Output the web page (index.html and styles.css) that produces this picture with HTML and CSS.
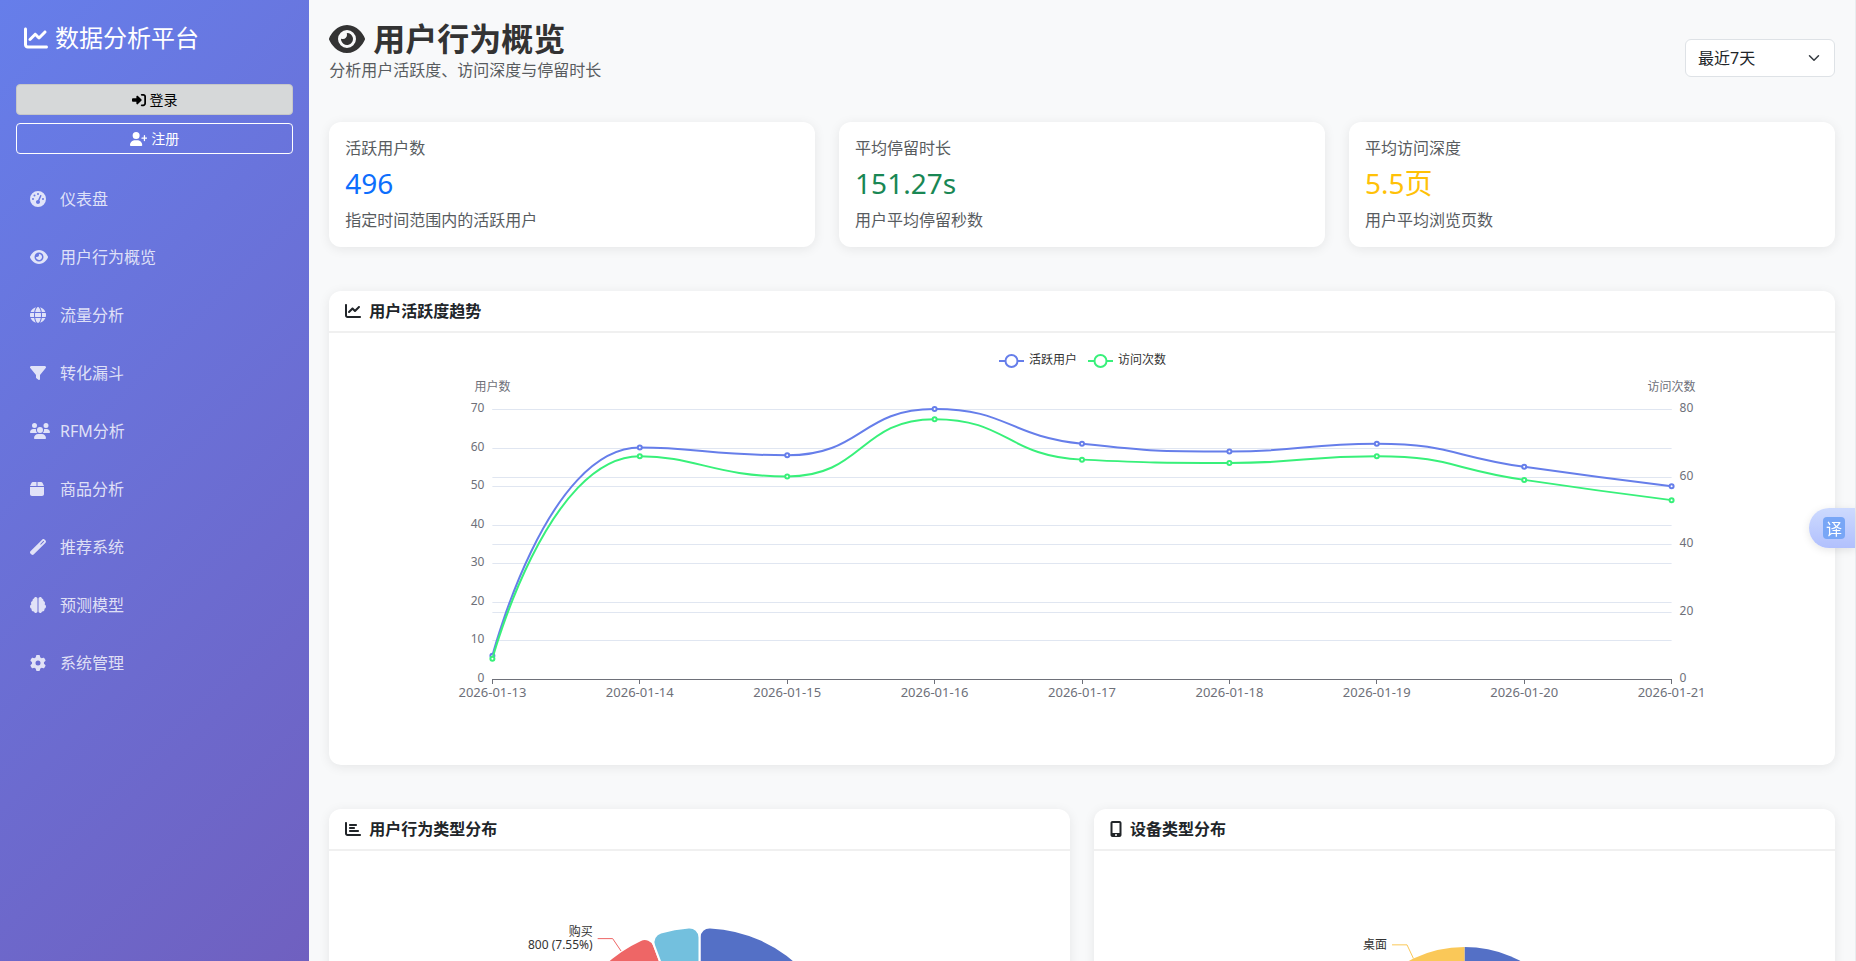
FILE: index.html
```html
<!DOCTYPE html>
<html lang="zh-CN">
<head>
<meta charset="utf-8">
<meta name="viewport" content="width=device-width, initial-scale=1">
<title>用户行为概览</title>
<link rel="stylesheet" href="styles.css">
</head>
<body>
<svg class="sprite" aria-hidden="true">
  <symbol id="i-line" viewBox="0 0 512 512"><path d="M64 64c0-17.700-14.300-32-32-32S0 46.300 0 64V400c0 44.200 35.800 80 80 80H480c17.700 0 32-14.300 32-32s-14.300-32-32-32H80c-8.800 0-16-7.200-16-16V64zm406.600 86.600c12.500-12.500 12.500-32.800 0-45.300s-32.800-12.500-45.300 0L320 210.700l-57.400-57.400c-12.500-12.500-32.800-12.500-45.300 0l-112 112c-12.500 12.500-12.500 32.800 0 45.300s32.800 12.500 45.300 0L240 221.300l57.400 57.400c12.500 12.500 32.800 12.500 45.300 0l128-128z"/></symbol>
  <symbol id="i-eye" viewBox="0 0 576 512"><path d="M288 32c-80.800 0-145.500 36.800-192.600 80.600C48.600 156 17.300 208 2.500 243.700c-3.300 7.900-3.300 16.700 0 24.600C17.300 304 48.600 356 95.400 399.400C142.500 443.200 207.200 480 288 480s145.500-36.800 192.600-80.600c46.800-43.500 78.100-95.400 93-131.100c3.300-7.900 3.300-16.700 0-24.600c-14.900-35.700-46.200-87.700-93-131.100C433.500 68.800 368.800 32 288 32zM144 256a144 144 0 1 1 288 0 144 144 0 1 1 -288 0zm144-64c0 35.300-28.700 64-64 64c-7.100 0-13.900-1.200-20.300-3.300c-5.500-1.800-11.900 1.600-11.700 7.400c.3 6.900 1.300 13.800 3.200 20.700c13.700 51.200 66.400 81.600 117.600 67.900s81.600-66.400 67.900-117.600c-11.100-41.500-47.800-69.400-88.600-71.100c-5.800-.2-9.200 6.100-7.400 11.700c2.100 6.400 3.300 13.200 3.300 20.300z"/></symbol>
  <symbol id="i-login" viewBox="0 0 512 512"><path d="M217.900 105.900L340.700 228.700c7.200 7.200 11.300 17.100 11.300 27.300s-4.100 20.100-11.300 27.300L217.900 406.100c-6.400 6.400-15 9.900-24 9.900c-18.700 0-33.900-15.200-33.900-33.900l0-62.100L32 320c-17.700 0-32-14.300-32-32l0-64c0-17.700 14.300-32 32-32l128 0 0-62.100c0-18.700 15.200-33.900 33.900-33.900c9 0 17.600 3.600 24 9.900zM352 416l64 0c17.700 0 32-14.300 32-32l0-256c0-17.700-14.300-32-32-32l-64 0c-17.700 0-32-14.300-32-32s14.300-32 32-32l64 0c53 0 96 43 96 96l0 256c0 53-43 96-96 96l-64 0c-17.700 0-32-14.300-32-32s14.300-32 32-32z"/></symbol>
  <symbol id="i-userplus" viewBox="0 0 640 512"><path d="M96 128a128 128 0 1 1 256 0A128 128 0 1 1 96 128zM0 482.300C0 383.800 79.800 304 178.300 304h91.400C368.200 304 448 383.800 448 482.300c0 16.400-13.300 29.700-29.700 29.700H29.700C13.300 512 0 498.700 0 482.300zM504 312V248H440c-13.300 0-24-10.700-24-24s10.700-24 24-24h64V136c0-13.300 10.700-24 24-24s24 10.700 24 24v64h64c13.300 0 24 10.700 24 24s-10.700 24-24 24H552v64c0 13.300-10.700 24-24 24s-24-10.700-24-24z"/></symbol>
  <symbol id="i-gauge" viewBox="0 0 512 512"><path d="M0 256a256 256 0 1 1 512 0A256 256 0 1 1 0 256zM288 96a32 32 0 1 0 -64 0 32 32 0 1 0 64 0zM256 416c35.300 0 64-28.700 64-64c0-17.400-6.900-33.100-18.100-44.600L366 161.700c5.300-12.100-.2-26.300-12.300-31.600s-26.300 .2-31.600 12.300L257.900 288c-.6 0-1.300 0-1.900 0c-35.300 0-64 28.700-64 64s28.700 64 64 64zM176 144a32 32 0 1 0 -64 0 32 32 0 1 0 64 0zM96 288a32 32 0 1 0 0-64 32 32 0 1 0 0 64zm352-32a32 32 0 1 0 -64 0 32 32 0 1 0 64 0z"/></symbol>
  <symbol id="i-globe" viewBox="0 0 512 512"><path d="M352 256c0 22.200-1.200 43.600-3.300 64H163.300c-2.200-20.400-3.300-41.800-3.300-64s1.200-43.600 3.300-64H348.700c2.200 20.400 3.300 41.800 3.300 64zm28.800-64H503.900c5.300 20.500 8.100 41.900 8.100 64s-2.800 43.500-8.100 64H380.800c2.100-20.600 3.200-42 3.200-64s-1.100-43.400-3.200-64zm112.600-32H376.700c-10-63.900-29.800-117.400-55.300-151.600c78.300 20.700 142 77.500 171.900 151.600zm-149.100 0H167.700c6.100-36.400 15.500-68.600 27-94.700c10.500-23.600 22.200-40.700 33.500-51.500C239.400 3.200 248.700 0 256 0s16.600 3.200 27.800 13.800c11.300 10.800 23 27.900 33.500 51.500c11.600 26 20.900 58.200 27 94.700zm-209 0H18.600C48.600 85.900 112.200 29.100 190.600 8.400C165.100 42.600 145.300 96.100 135.300 160zM8.100 192H131.200c-2.100 20.600-3.200 42-3.200 64s1.100 43.400 3.200 64H8.100C2.800 299.500 0 278.100 0 256s2.800-43.500 8.100-64zM194.700 446.600c-11.600-26-20.900-58.200-27-94.600H344.300c-6.100 36.400-15.500 68.600-27 94.600c-10.500 23.600-22.200 40.700-33.500 51.500C272.600 508.800 263.300 512 256 512s-16.600-3.200-27.800-13.800c-11.300-10.800-23-27.900-33.500-51.500zM135.300 352c10 63.900 29.800 117.400 55.300 151.600C112.200 482.900 48.600 426.100 18.600 352H135.300zm358.100 0c-30 74.100-93.600 130.900-171.900 151.600c25.500-34.200 45.200-87.700 55.300-151.600H493.400z"/></symbol>
  <symbol id="i-filter" viewBox="0 0 512 512"><path d="M3.900 54.900C10.500 40.900 24.500 32 40 32H472c15.500 0 29.500 8.900 36.100 22.900s4.600 30.500-5.200 42.500L320 320.900V448c0 12.100-6.800 23.200-17.700 28.600s-23.800 4.300-33.500-3l-64-48c-8.100-6-12.800-15.500-12.800-25.600V320.900L9 97.300C-.7 85.400-2.800 68.800 3.900 54.900z"/></symbol>
  <symbol id="i-users" viewBox="0 0 640 512"><path d="M144 0a80 80 0 1 1 0 160A80 80 0 1 1 144 0zM512 0a80 80 0 1 1 0 160A80 80 0 1 1 512 0zM0 298.700C0 239.800 47.800 192 106.700 192h42.700c15.900 0 31 3.500 44.600 9.700c-1.300 7.200-1.900 14.700-1.900 22.300c0 38.200 16.800 72.500 43.300 96c-.2 0-.4 0-.7 0H21.300C9.600 320 0 310.400 0 298.700zM405.300 320c-.2 0-.4 0-.7 0c26.600-23.500 43.300-57.800 43.300-96c0-7.600-.7-15-1.900-22.300c13.600-6.300 28.700-9.700 44.600-9.700h42.700C592.200 192 640 239.800 640 298.700c0 11.800-9.600 21.300-21.300 21.300H405.300zM224 224a96 96 0 1 1 192 0 96 96 0 1 1 -192 0zM128 485.300C128 411.700 187.700 352 261.300 352H378.700C452.300 352 512 411.700 512 485.300c0 14.700-11.900 26.700-26.700 26.700H154.700c-14.700 0-26.700-11.900-26.700-26.700z"/></symbol>
  <symbol id="i-box" viewBox="0 0 448 512"><path d="M50.700 58.500L0 160H208V32H93.700C75.500 32 58.900 42.300 50.700 58.500zM240 160H448L397.300 58.500C389.100 42.300 372.500 32 354.300 32H240V160zm208 32H0V416c0 35.300 28.700 64 64 64H384c35.300 0 64-28.700 64-64V192z"/></symbol>
  <symbol id="i-wand" viewBox="0 0 512 512"><path fill-rule="evenodd" d="M14.100 463.300c-18.700-18.700-18.700-49.100 0-67.900L395.400 14.100c18.700-18.700 49.100-18.700 67.900 0l34.600 34.600c18.700 18.700 18.700 49.100 0 67.900L116.500 497.900c-18.700 18.700-49.100 18.700-67.900 0L14.100 463.300zM347.600 187.600l105-105L429.400 59.300l-105 105 23.300 23.300z"/></symbol>
  <symbol id="i-brain" viewBox="0 0 512 512"><path d="M184 0c30.900 0 56 25.100 56 56V456c0 30.900-25.100 56-56 56c-28.900 0-52.700-21.900-55.700-50.100c-5.200 1.400-10.700 2.100-16.300 2.100c-35.300 0-64-28.700-64-64c0-7.400 1.300-14.600 3.600-21.200C21.400 367.400 0 338.200 0 304c0-31.900 18.700-59.500 45.800-72.300C37.100 220.800 32 207 32 192c0-30.700 21.600-56.300 50.400-62.600C80.800 123.900 80 118 80 112c0-29.900 20.600-55.100 48.300-62.100C131.300 21.900 155.100 0 184 0zM328 0c28.900 0 52.600 21.900 55.700 49.900c27.800 7 48.300 32.100 48.300 62.100c0 6-.8 11.900-2.400 17.400c28.800 6.200 50.400 31.900 50.400 62.600c0 15-5.100 28.800-13.800 39.700C493.300 244.500 512 272.100 512 304c0 34.200-21.400 63.400-51.600 74.800c2.300 6.600 3.600 13.800 3.600 21.200c0 35.300-28.700 64-64 64c-5.600 0-11.100-.7-16.300-2.100c-3 28.200-26.800 50.100-55.700 50.100c-30.900 0-56-25.100-56-56V56c0-30.900 25.100-56 56-56z"/></symbol>
  <symbol id="i-gear" viewBox="0 0 512 512"><path d="M495.900 166.600c3.200 8.700 .5 18.400-6.400 24.600l-43.300 39.400c1.100 8.300 1.700 16.800 1.700 25.400s-.6 17.100-1.700 25.400l43.300 39.400c6.900 6.200 9.600 15.900 6.400 24.600c-4.400 11.900-9.700 23.300-15.800 34.300l-4.700 8.100c-6.600 11-14 21.400-22.100 31.200c-5.900 7.200-15.700 9.600-24.500 6.800l-55.700-17.700c-13.400 10.300-28.200 18.900-44 25.400l-12.500 57.100c-2 9.100-9 16.300-18.200 17.800c-13.800 2.300-28 3.500-42.500 3.500s-28.700-1.200-42.500-3.500c-9.200-1.500-16.200-8.700-18.200-17.800l-12.500-57.100c-15.800-6.500-30.600-15.100-44-25.400L83.100 425.900c-8.800 2.800-18.600 .3-24.500-6.800c-8.100-9.800-15.500-20.200-22.100-31.200l-4.700-8.100c-6.100-11-11.400-22.400-15.800-34.300c-3.200-8.700-.5-18.400 6.400-24.600l43.300-39.400C64.600 273.100 64 264.600 64 256s.6-17.100 1.700-25.400L22.400 191.200c-6.900-6.200-9.600-15.900-6.400-24.600c4.400-11.900 9.700-23.300 15.800-34.300l4.700-8.100c6.600-11 14-21.400 22.100-31.200c5.900-7.200 15.700-9.600 24.500-6.800l55.700 17.700c13.400-10.300 28.200-18.900 44-25.400l12.500-57.100c2-9.100 9-16.300 18.200-17.800C227.300 1.200 241.500 0 256 0s28.700 1.200 42.500 3.500c9.200 1.500 16.200 8.700 18.200 17.800l12.500 57.100c15.800 6.500 30.600 15.100 44 25.400l55.700-17.700c8.800-2.800 18.600-.3 24.500 6.800c8.100 9.800 15.500 20.200 22.100 31.200l4.700 8.100c6.100 11 11.400 22.400 15.800 34.300zM256 336a80 80 0 1 0 0-160 80 80 0 1 0 0 160z"/></symbol>
  <symbol id="i-bars" viewBox="0 0 512 512"><path d="M32 32c17.700 0 32 14.300 32 32V400c0 8.800 7.200 16 16 16H480c17.700 0 32 14.300 32 32s-14.300 32-32 32H80c-44.200 0-80-35.800-80-80V64C0 46.300 14.300 32 32 32zm96 96c0-17.700 14.300-32 32-32l192 0c17.700 0 32 14.300 32 32s-14.300 32-32 32H160c-17.700 0-32-14.300-32-32zm32 64H288c17.700 0 32 14.300 32 32s-14.300 32-32 32H160c-17.700 0-32-14.300-32-32s14.300-32 32-32zm0 96H416c17.700 0 32 14.300 32 32s-14.300 32-32 32H160c-17.700 0-32-14.300-32-32s14.300-32 32-32z"/></symbol>
  <symbol id="i-mobile" viewBox="0 0 384 512"><path fill-rule="evenodd" d="M16 64C16 28.700 44.700 0 80 0H304c35.300 0 64 28.700 64 64V448c0 35.300-28.700 64-64 64H80c-35.300 0-64-28.700-64-64V64zM224 448a32 32 0 1 0 -64 0 32 32 0 1 0 64 0zM304 64H80V384H304V64z"/></symbol>
</svg>

<div class="layout">
  <aside class="sidebar">
    <div class="brand"><svg class="icon" viewBox="0 0 512 512"><use href="#i-line"/></svg><span>数据分析平台</span></div>
    <div class="auth">
      <button type="button" class="btn btn-light"><svg class="icon" viewBox="0 0 512 512"><use href="#i-login"/></svg>登录</button>
      <button type="button" class="btn btn-outline"><svg class="icon icon-640" viewBox="0 0 640 512"><use href="#i-userplus"/></svg>注册</button>
    </div>
    <nav class="nav">
      <a href="#"><span class="nav-icon"><svg class="icon" viewBox="0 0 512 512"><use href="#i-gauge"/></svg></span>仪表盘</a>
      <a href="#"><span class="nav-icon"><svg class="icon icon-576" viewBox="0 0 576 512"><use href="#i-eye"/></svg></span>用户行为概览</a>
      <a href="#"><span class="nav-icon"><svg class="icon" viewBox="0 0 512 512"><use href="#i-globe"/></svg></span>流量分析</a>
      <a href="#"><span class="nav-icon"><svg class="icon" viewBox="0 0 512 512"><use href="#i-filter"/></svg></span>转化漏斗</a>
      <a href="#"><span class="nav-icon"><svg class="icon icon-640" viewBox="0 0 640 512"><use href="#i-users"/></svg></span>RFM分析</a>
      <a href="#"><span class="nav-icon"><svg class="icon icon-448" viewBox="0 0 448 512"><use href="#i-box"/></svg></span>商品分析</a>
      <a href="#"><span class="nav-icon"><svg class="icon" viewBox="0 0 512 512"><use href="#i-wand"/></svg></span>推荐系统</a>
      <a href="#"><span class="nav-icon"><svg class="icon" viewBox="0 0 512 512"><use href="#i-brain"/></svg></span>预测模型</a>
      <a href="#"><span class="nav-icon"><svg class="icon" viewBox="0 0 512 512"><use href="#i-gear"/></svg></span>系统管理</a>
    </nav>
  </aside>

  <main class="main">
    <header class="page-header">
      <div class="heading">
        <h1><svg class="icon icon-576" viewBox="0 0 576 512"><use href="#i-eye"/></svg>用户行为概览</h1>
        <p class="muted">分析用户活跃度、访问深度与停留时长</p>
      </div>
      <div class="range">
        <select aria-label="时间范围"><option>最近7天</option></select>
        <svg class="chevron" viewBox="0 0 16 16" aria-hidden="true"><path d="m2 5 6 6 6-6"/></svg>
      </div>
    </header>

    <section class="stats">
      <article class="card stat"><h2 class="muted">活跃用户数</h2><p class="value blue">496</p><p class="muted">指定时间范围内的活跃用户</p></article>
      <article class="card stat"><h2 class="muted">平均停留时长</h2><p class="value green">151.27s</p><p class="muted">用户平均停留秒数</p></article>
      <article class="card stat"><h2 class="muted">平均访问深度</h2><p class="value yellow">5.5页</p><p class="muted">用户平均浏览页数</p></article>
    </section>

    <section class="card">
      <h2 class="card-title"><svg class="icon" viewBox="0 0 512 512"><use href="#i-line"/></svg>用户活跃度趋势</h2>
      <div class="card-body"><svg class="chart" id="trend" role="img" aria-label="用户活跃度趋势"></svg></div>
    </section>

    <div class="pair">
      <section class="card">
        <h2 class="card-title"><svg class="icon" viewBox="0 0 512 512"><use href="#i-bars"/></svg>用户行为类型分布</h2>
        <div class="card-body"><svg class="chart" id="behavior" role="img" aria-label="用户行为类型分布"></svg></div>
      </section>
      <section class="card">
        <h2 class="card-title"><svg class="icon icon-384" viewBox="0 0 384 512"><use href="#i-mobile"/></svg>设备类型分布</h2>
        <div class="card-body"><svg class="chart" id="device" role="img" aria-label="设备类型分布"></svg></div>
      </section>
    </div>
  </main>
</div>
<button type="button" class="translate" aria-label="翻译"><span>译</span></button>
<script src="charts.js"></script>
</body>
</html>
```

FILE: styles.css
```css
* { box-sizing: border-box; }

body {
  margin: 0;
  background: #f8f9fa;
  color: #212529;
  font: 16px/24px "Noto Sans", "Noto Sans CJK SC", sans-serif;
}

h1, h2, p { margin: 0; font-weight: 400; }

.sprite { position: absolute; width: 0; height: 0; }

.layout {
  display: grid;
  grid-template-columns: 1fr 5fr;
  min-height: 100vh;
  border-right: 1px solid #e9ecef;
}

.icon { width: 1em; height: 1em; fill: currentColor; flex: none; }
.icon-640 { width: 1.25em; }
.icon-576 { width: 1.125em; }
.icon-448 { width: 0.875em; }
.icon-384 { width: 0.75em; }

/* Sidebar */
.sidebar {
  background: linear-gradient(135deg, #667eea 0%, #764ba2 132%);
  color: #fff;
}

.brand {
  display: flex;
  align-items: center;
  gap: 7px;
  padding: 20px 24px 28px;
  font-size: 24px;
  line-height: 36px;
}

.auth { display: grid; gap: 8px; padding: 0 16px; }

.btn {
  display: flex;
  align-items: center;
  justify-content: center;
  gap: 4px;
  padding: 4px 8px;
  border: 1px solid #fff;
  border-radius: 4px;
  font: 14px/21px "Noto Sans", "Noto Sans CJK SC", sans-serif;
}
.btn-light { background: #d6d8d9; border-color: #c6c7c8; color: #000; }
.btn-outline { background: transparent; color: #fff; }

.nav { display: grid; padding-top: 16px; }
.nav a {
  display: flex;
  align-items: center;
  padding: 17px 30px;
  color: rgba(255, 255, 255, 0.8);
  text-decoration: none;
}
.nav-icon { display: flex; width: 30px; }

/* Main column */
.main {
  display: flex;
  flex-direction: column;
  gap: 44px;
  min-width: 0;
  padding: 20px 20px 44px;
}

.page-header {
  display: flex;
  align-items: center;
  justify-content: space-between;
  margin-bottom: -18px;
}
.heading { padding-bottom: 14px; }
.page-header h1 {
  display: flex;
  align-items: center;
  gap: 8px;
  color: #333;
  font-size: 32px;
  font-weight: 700;
  line-height: 38px;
}

.muted { color: #585c5f; }

.range { position: relative; width: 150px; }
.range select {
  display: block;
  width: 100%;
  height: 38px;
  padding: 6px 36px 6px 12px;
  border: 1px solid #dee2e6;
  border-radius: 6px;
  background: #fff;
  color: #212529;
  font: 16px/24px "Noto Sans", "Noto Sans CJK SC", sans-serif;
  appearance: none;
}
.chevron {
  position: absolute;
  top: 13px;
  right: 15px;
  width: 12px;
  height: 12px;
  fill: none;
  stroke: #343a40;
  stroke-width: 2;
  stroke-linecap: round;
  stroke-linejoin: round;
  pointer-events: none;
}

.card {
  min-width: 0;
  border-radius: 12px;
  background: #fff;
  box-shadow: 0 2px 12px rgba(0, 0, 0, 0.08);
}

.stats { display: grid; grid-template-columns: repeat(3, 1fr); gap: 24px; }
.stat { display: grid; gap: 8px; padding: 17px 16px 15px; }
.stat h2 { font-size: 16px; line-height: 19px; }
.value { font-size: 28px; line-height: 34px; }
.blue { color: #0d6efd; }
.green { color: #198754; }
.yellow { color: #ffc107; }

.pair { display: grid; grid-template-columns: repeat(2, 1fr); gap: 24px; }

.card-title {
  display: flex;
  align-items: center;
  gap: 8px;
  padding: 8px 16px;
  border-bottom: 2px solid #f0f0f0;
  font-size: 16px;
  font-weight: 600;
  line-height: 24px;
}
.card-body { padding: 16px; }

/* Charts */
.chart {
  display: block;
  width: 100%;
  height: 400px;
  overflow: visible;
  font-size: 12px;
}
.chart .axis { fill: #6e7079; }
.chart .date { font-size: 13px; }
.chart .label { fill: #333; }

.translate {
  position: fixed;
  top: 508px;
  right: 1px;
  display: flex;
  align-items: center;
  width: 46px;
  height: 40px;
  padding: 0 0 0 14px;
  border: 0;
  border-radius: 20px 0 0 20px;
  background: linear-gradient(#cddafe, #b1c0fd);
  box-shadow: 0 2px 8px rgba(0, 0, 0, 0.1);
}
.translate span {
  width: 22px;
  border-radius: 4px;
  background: #78a6f6;
  color: #fff;
  font: 16px/22px "Noto Sans CJK SC", sans-serif;
  text-align: center;
}
```

FILE: charts.js
```js
const NS = 'http://www.w3.org/2000/svg';

function add(parent, tag, attrs, text) {
  const el = document.createElementNS(NS, tag);
  for (const key in attrs) el.setAttribute(key, attrs[key]);
  if (text !== undefined) el.textContent = text;
  parent.appendChild(el);
  return el;
}

// Smooth curve through the points, with control points kept inside each segment.
function smoothPath(points) {
  const clamp = (v, a, b) => Math.max(Math.min(v, Math.max(a, b)), Math.min(a, b));
  let d = `M${points[0]}`;
  let [cx, cy] = points[0];
  for (let i = 1; i < points.length; i++) {
    const [px, py] = points[i - 1];
    const [x, y] = points[i];
    let c1x = x, c1y = y, nx = x, ny = y;
    if (points[i + 1]) {
      const [qx, qy] = points[i + 1];
      const before = Math.hypot(x - px, y - py);
      const after = Math.hypot(qx - x, qy - y);
      const ratio = after / (after + before);
      nx = clamp(x + (qx - px) * 0.5 * ratio, qx, x);
      ny = clamp(y + (qy - py) * 0.5 * ratio, qy, y);
      c1x = clamp(x - (nx - x) * before / after, px, x);
      c1y = clamp(y - (ny - y) * before / after, py, y);
      nx = x + (x - c1x) * after / before;
      ny = y + (y - c1y) * after / before;
    }
    d += `C${cx},${cy} ${c1x},${c1y} ${x},${y}`;
    cx = nx;
    cy = ny;
  }
  return d;
}

function drawTrend() {
  const svg = document.getElementById('trend');
  svg.replaceChildren();
  const width = svg.clientWidth;
  const left = width * 0.1, right = width * 0.9, top = 60, bottom = 330;
  const dates = [13, 14, 15, 16, 17, 18, 19, 20, 21];
  const series = [
    { name: '活跃用户', color: '#667eea', max: 70, values: [6, 60, 58, 70, 61, 59, 61, 55, 50] },
    { name: '访问次数', color: '#38f07a', max: 80, values: [6, 66, 60, 77, 65, 64, 66, 59, 53] }
  ];
  const xAt = i => left + (right - left) * i / (dates.length - 1);
  const yAt = (v, max) => bottom - (bottom - top) * v / max;
  const crisp = v => Math.round(v) + 0.5;

  [[70, 10, left - 8, 'end'], [80, 20, right + 8, 'start']].forEach(([max, step, x, anchor]) => {
    for (let v = 0; v <= max; v += step) {
      const y = yAt(v, max);
      if (v) add(svg, 'line', { x1: left, x2: right, y1: crisp(y), y2: crisp(y), stroke: '#e0e6f1' });
      add(svg, 'text', { x, y: y + 3, 'text-anchor': anchor, class: 'axis' }, v);
    }
  });
  add(svg, 'text', { x: left, y: 42, 'text-anchor': 'middle', class: 'axis' }, '用户数');
  add(svg, 'text', { x: right, y: 42, 'text-anchor': 'middle', class: 'axis' }, '访问次数');

  add(svg, 'line', { x1: left, x2: right, y1: bottom + 0.5, y2: bottom + 0.5, stroke: '#6e7079' });
  dates.forEach((day, i) => {
    const x = Math.floor(xAt(i)) + 0.5;
    add(svg, 'line', { x1: x, x2: x, y1: bottom, y2: bottom + 5, stroke: '#6e7079' });
    add(svg, 'text', { x: xAt(i), y: bottom + 18, 'text-anchor': 'middle', class: 'axis date' }, `2026-01-${day}`);
  });

  series.forEach((s, n) => {
    const points = s.values.map((v, i) => [xAt(i), yAt(v, s.max)]);
    add(svg, 'path', { d: smoothPath(points), fill: 'none', stroke: s.color, 'stroke-width': 2 });
    points.forEach(([cx, cy]) => add(svg, 'circle', { cx, cy, r: 2, fill: '#fff', stroke: s.color, 'stroke-width': 2 }));
    const x = width / 2 - 83 + n * 89;
    add(svg, 'line', { x1: x, x2: x + 25, y1: 12, y2: 12, stroke: s.color, 'stroke-width': 2 });
    add(svg, 'circle', { cx: x + 12.5, cy: 12, r: 6, fill: '#fff', stroke: s.color, 'stroke-width': 2 });
    add(svg, 'text', { x: x + 30, y: 15, class: 'label' }, s.name);
  });
}

// Ring or pie sector with optionally rounded corners; angles run clockwise from the top.
function sectorPath(cx, cy, inner, outer, a0, a1, corner) {
  const at = (r, a) => `${cx + r * Math.sin(a)},${cy - r * Math.cos(a)}`;
  const large = a1 - a0 > Math.PI ? 1 : 0;
  if (!inner) return `M${cx},${cy}L${at(outer, a0)}A${outer},${outer} 0 ${large} 1 ${at(outer, a1)}Z`;
  const oo = Math.asin(corner / (outer - corner));
  const io = Math.asin(corner / (inner + corner));
  const oe = Math.sqrt((outer - corner) ** 2 - corner ** 2);
  const ie = Math.sqrt((inner + corner) ** 2 - corner ** 2);
  const c = `A${corner},${corner} 0 0 1 `;
  return `M${at(oe, a0)}${c}${at(outer, a0 + oo)}A${outer},${outer} 0 ${large} 1 ${at(outer, a1 - oo)}${c}${at(oe, a1)}` +
    `L${at(ie, a1)}${c}${at(inner, a1 - io)}A${inner},${inner} 0 ${large} 0 ${at(inner, a0 + io)}${c}${at(ie, a0)}Z`;
}

function drawPie(id, inner, outer, slices, corner) {
  const svg = document.getElementById(id);
  svg.replaceChildren();
  const cx = svg.clientWidth / 2, cy = 200;
  let angle = 0;
  slices.forEach(s => {
    const next = angle + s.share * Math.PI * 2;
    const attrs = { d: sectorPath(cx, cy, inner, outer, angle, next, corner), fill: s.color };
    if (inner) Object.assign(attrs, { stroke: '#fff', 'stroke-width': 2 });
    add(svg, 'path', attrs);
    if (s.label) {
      const mid = (angle + next) / 2;
      const x = r => cx + r * Math.sin(mid), y = r => cy - r * Math.cos(mid);
      const r = outer + 15;
      add(svg, 'polyline', { points: `${x(outer)},${y(outer)} ${x(r)},${y(r)} ${x(r) - 15},${y(r)}`, fill: 'none', stroke: s.color });
      s.label.forEach((line, i) => {
        const dy = 4 + (i - (s.label.length - 1) / 2) * 13;
        add(svg, 'text', { x: x(r) - 20, y: y(r) + dy, 'text-anchor': 'end', class: 'label' }, line);
      });
    }
    angle = next;
  });
}

function draw() {
  drawTrend();
  drawPie('behavior', 80, 140, [
    { share: 0.52, color: '#5470c6' },
    { share: 0.2, color: '#91cc75' },
    { share: 0.1476, color: '#fac858' },
    { share: 0.0755, color: '#ee6666', label: ['购买', '800 (7.55%)'] },
    { share: 0.0569, color: '#73c0de' }
  ], 10);
  drawPie('device', 0, 120, [
    { share: 0.5, color: '#5470c6' },
    { share: 0.36, color: '#91cc75' },
    { share: 0.14, color: '#fac858', label: ['桌面'] }
  ], 0);
}

draw();
window.addEventListener('resize', draw);
```
